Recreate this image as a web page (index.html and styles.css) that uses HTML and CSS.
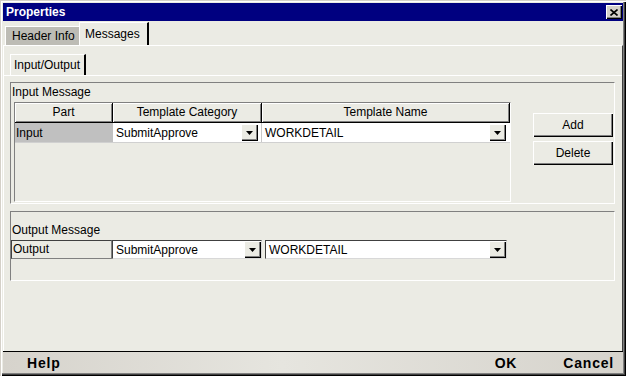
FILE: index.html
```html
<!DOCTYPE html>
<html lang="en">
<head>
    <meta charset="UTF-8">
    <title>Properties</title>
    <link rel="stylesheet" href="styles.css">
</head>
<body>
<div class="window">
    <div class="titlebar">
        <span class="title">Properties</span>
        <div class="close-btn">
            <svg width="8" height="7" viewBox="0 0 8 7"><path d="M0.5 0.5 L7.5 6.5 M7.5 0.5 L0.5 6.5" stroke="#000" stroke-width="1.6"/></svg>
        </div>
    </div>

    <div class="tabs">
        <div class="tab">Header Info</div>
        <div class="tab active">Messages</div>
    </div>

    <div class="panel">
        <div class="subtabs">
            <div class="subtab">Input/Output</div>
        </div>

        <div class="subpanel">
            <!-- input message -->
            <div class="group group-input">
                <div class="group-label">Input Message</div>
                <div class="group-body">
                    <div class="table-pane">
                        <div class="table-row head">
                            <div class="th col-part">Part</div>
                            <div class="th col-cat">Template Category</div>
                            <div class="th col-name">Template Name</div>
                        </div>
                        <div class="table-row">
                            <div class="td col-part part-cell">Input</div>
                            <div class="td col-cat">
                                <div class="combo">
                                    <span>SubmitApprove</span>
                                    <div class="drop-btn"><svg width="7" height="4" viewBox="0 0 7 4"><path d="M0 0 H7 L3.5 4 Z" fill="#000"/></svg></div>
                                </div>
                            </div>
                            <div class="td col-name">
                                <div class="combo combo-wide">
                                    <span>WORKDETAIL</span>
                                    <div class="drop-btn"><svg width="7" height="4" viewBox="0 0 7 4"><path d="M0 0 H7 L3.5 4 Z" fill="#000"/></svg></div>
                                </div>
                            </div>
                        </div>
                    </div>
                    <div class="side-buttons">
                        <button class="btn">Add</button>
                        <button class="btn">Delete</button>
                    </div>
                </div>
            </div>

            <!-- output message -->
            <div class="group group-output">
                <div class="group-label out-label">Output Message</div>
                <div class="out-row">
                    <div class="out-part">Output</div>
                    <div class="out-combo out-cat">
                        <span>SubmitApprove</span>
                        <div class="drop-btn"><svg width="7" height="4" viewBox="0 0 7 4"><path d="M0 0 H7 L3.5 4 Z" fill="#000"/></svg></div>
                    </div>
                    <div class="out-combo out-name">
                        <span>WORKDETAIL</span>
                        <div class="drop-btn"><svg width="7" height="4" viewBox="0 0 7 4"><path d="M0 0 H7 L3.5 4 Z" fill="#000"/></svg></div>
                    </div>
                </div>
            </div>
        </div>
    </div>

    <div class="footer">
        <span class="foot-btn help">Help</span>
        <span class="foot-btn ok">OK</span>
        <span class="foot-btn cancel">Cancel</span>
    </div>
</div>
</body>
</html>
```

FILE: styles.css
```css
:root {
    --face: #ebebe4;
    --shadow: #808080;
    --dark: #404040;
    --navy: #000080;
}

* {
    box-sizing: border-box;
}

body {
    margin: 0;
    font-family: 'Liberation Sans', Arial, sans-serif;
    font-size: 12px;
    color: #000;
    background: var(--face);
}

.window {
    width: 626px;
    height: 376px;
    padding: 3px;
    background: var(--face);
    display: flex;
    flex-direction: column;
    box-shadow: inset 1px 1px #d4d0c8, inset 2px 2px #fff, inset -1px -1px #000, inset -2px -2px var(--dark), inset -3px -3px var(--shadow);
}

/* title bar */
.titlebar {
    height: 18px;
    background: var(--navy);
    color: #fff;
    display: flex;
    align-items: center;
    justify-content: space-between;
    padding: 0 1px 0 3px;
}

.title {
    font-weight: bold;
    font-size: 12px;
}

.close-btn {
    width: 16px;
    height: 14px;
    background: #d4d0c8;
    display: flex;
    align-items: center;
    justify-content: center;
    box-shadow: inset 1px 1px #fff, inset -1px -1px #000, inset -2px -2px var(--shadow);
}

/* tabs */
.tabs {
    height: 24px;
    display: flex;
    align-items: flex-end;
    padding-left: 2px;
}

.tab {
    height: 19px;
    width: 74px;
    padding-left: 6px;
    line-height: 18px;
    background: #bdbcb5;
    border-top: 1px solid #fff;
    border-left: 1px solid #fff;
}

.tab.active {
    height: 23px;
    width: 70px;
    padding-left: 5px;
    line-height: 22px;
    background: var(--face);
    border-right: 2px solid #000;
}

.panel {
    flex: 1;
    border-top: 1px solid #fff;
    border-left: 1px solid #fff;
    border-right: 1px solid var(--dark);
    display: flex;
    flex-direction: column;
}

.subtabs {
    height: 29px;
    display: flex;
    align-items: flex-end;
    padding-left: 6px;
}

.subtab {
    height: 21px;
    width: 76px;
    padding-left: 3px;
    line-height: 21px;
    border-top: 1px solid #fff;
    border-left: 1px solid #fff;
    border-right: 2px solid #000;
}

.subpanel {
    flex: 1;
    border-top: 1px solid #fff;
    padding: 6px 7px 0 6px;
}

/* group boxes */
.group {
    border: 1px solid;
    border-color: var(--shadow) #fff #fff var(--shadow);
}

.group-input {
    height: 122px;
    display: flex;
    flex-direction: column;
}

.group-label {
    height: 19px;
    line-height: 19px;
    padding-left: 1px;
}

.group-body {
    flex: 1;
    display: flex;
    align-items: flex-start;
}

.table-pane {
    margin-left: 3px;
    width: 497px;
    height: 100px;
    border: 1px solid;
    border-color: var(--shadow) #fff #fff var(--shadow);
}

.table-row {
    display: flex;
    height: 20px;
    border-bottom: 1px solid #d0d0d0;
}

.table-row.head {
    border-bottom: none;
}

.col-part { width: 98px; }
.col-cat { width: 149px; }
.col-name { width: 248px; }

.th {
    height: 20px;
    text-align: center;
    line-height: 18px;
    border-right: 1px solid #000;
    border-bottom: 1px solid #000;
    box-shadow: inset 1px 1px #fff, inset -1px -1px var(--shadow);
    background: var(--face);
}

.td {
    height: 19px;
}

.part-cell {
    background: #c0c0c0;
    padding-left: 1px;
    line-height: 20px;
}

.col-cat.td {
    border-right: 1px solid #c8c8c8;
}

.combo {
    height: 19px;
    background: #fff;
    display: flex;
    align-items: center;
    justify-content: space-between;
    padding: 0 3px;
}

.combo-wide {
    padding-right: 4px;
}

.drop-btn {
    width: 17px;
    height: 17px;
    background: var(--face);
    display: flex;
    align-items: center;
    justify-content: center;
    box-shadow: inset 1px 1px #fff, inset -1px -1px #000, inset -2px -2px var(--shadow);
}

.side-buttons {
    margin: 11px 0 0 22px;
    display: flex;
    flex-direction: column;
    gap: 4px;
}

.btn {
    width: 80px;
    height: 24px;
    font: inherit;
    background: var(--face);
    border: none;
    padding: 0;
    box-shadow: inset 1px 1px #fff, inset -1px -1px #000, inset -2px -2px var(--shadow);
}

.group-output {
    margin-top: 7px;
    height: 70px;
}

.out-label {
    height: 28px;
    line-height: 18px;
    padding-top: 9px;
}

.out-row {
    display: flex;
    height: 19px;
}

.out-part {
    width: 101px;
    padding-left: 1px;
    line-height: 17px;
    border: 1px solid var(--dark);
    border-right-color: var(--shadow);
    border-bottom-color: var(--shadow);
}

.out-combo {
    background: #fff;
    display: flex;
    align-items: center;
    justify-content: space-between;
    padding-left: 3px;
    border-top: 1px solid var(--dark);
    border-left: 1px solid var(--dark);
    border-right: 1px solid #d8d8d8;
    border-bottom: 1px solid #d8d8d8;
}

.out-cat {
    width: 150px;
}

.out-name {
    width: 242px;
    margin-left: 3px;
}

/* footer */
.footer {
    height: 22px;
    border-top: 1px solid #000;
    background: linear-gradient(to right, #d6d3cc, #e6e5df 45%, #d6d3cc);
    display: flex;
    align-items: center;
    padding: 0 9px 0 24px;
}

.foot-btn {
    font-weight: bold;
    font-size: 14px;
    letter-spacing: 0.8px;
}

.help {
    flex: 1;
}

.ok {
    margin-right: 46px;
}
```
